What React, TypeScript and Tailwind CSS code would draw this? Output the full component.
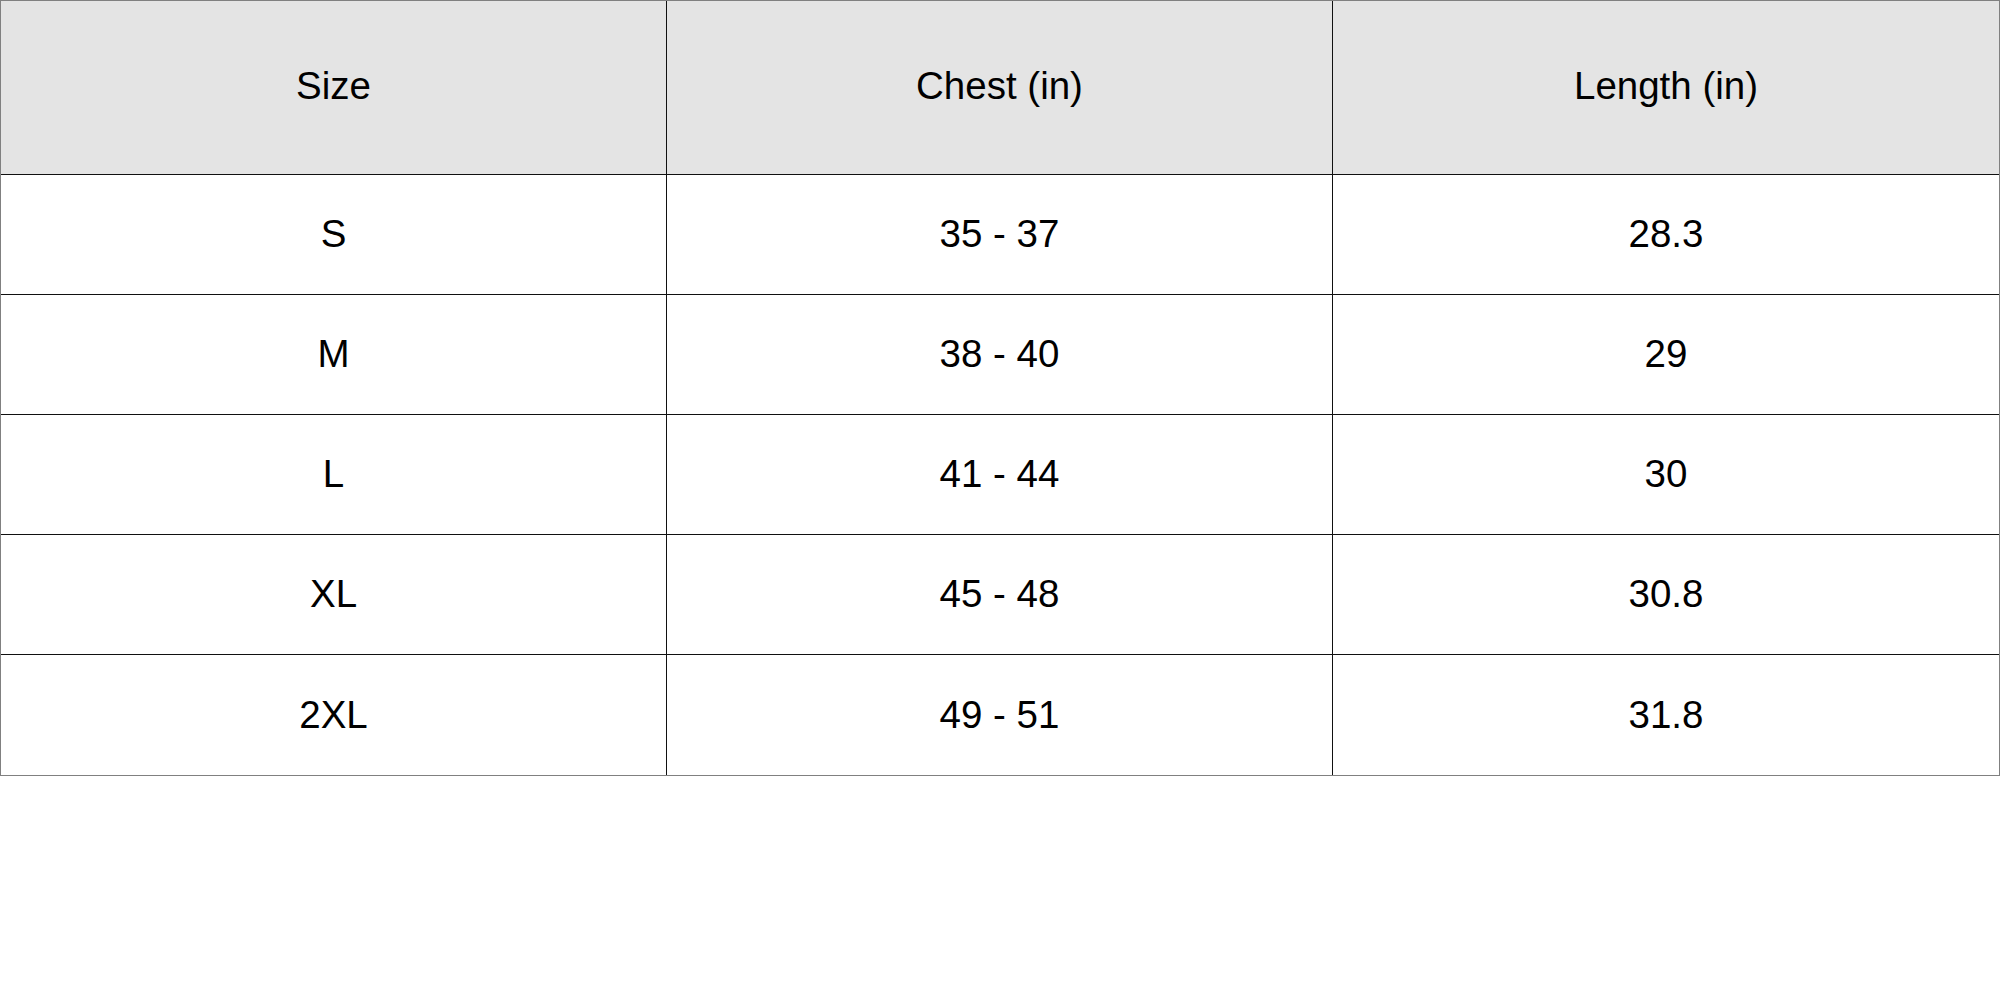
import React from "react";

const rows = [
  ["S", "35 - 37", "28.3"],
  ["M", "38 - 40", "29"],
  ["L", "41 - 44", "30"],
  ["XL", "45 - 48", "30.8"],
  ["2XL", "49 - 51", "31.8"],
];

export default function App() {
  return (
    <div className="w-[2000px] bg-white" style={{ fontFamily: '"Liberation Sans", Arial, sans-serif' }}>
      <div className="grid grid-cols-3 border border-[#808080] text-[38.5px] leading-none text-black">
        {["Size", "Chest (in)", "Length (in)"].map((h, i) => (
          <div
            key={h}
            className={
              i < 2
                ? "flex h-[174px] items-center justify-center border-b border-r border-[#111] bg-[#e4e4e4] pb-[2px]"
                : "flex h-[174px] items-center justify-center border-b border-[#111] bg-[#e4e4e4] pb-[2px]"
            }
          >
            {h}
          </div>
        ))}
        {rows.map((r, ri) =>
          r.map((c, ci) => {
            const last = ri === rows.length - 1;
            let cls = "flex h-[120px] items-center justify-center";
            if (!last) cls += " border-b border-[#111]";
            if (ci < 2) cls += " border-r border-[#111]";
            return (
              <div key={ri + "-" + ci} className={cls}>
                {c}
              </div>
            );
          })
        )}
      </div>
    </div>
  );
}
